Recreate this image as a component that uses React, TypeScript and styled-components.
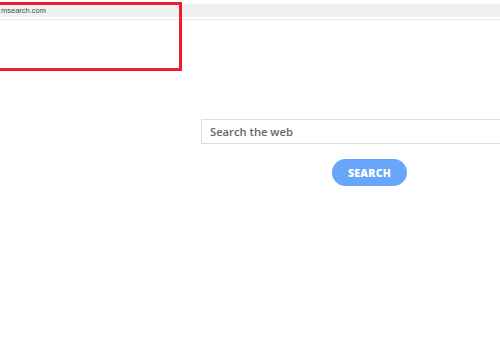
import styled, { createGlobalStyle } from 'styled-components';

const GlobalStyle = createGlobalStyle`
  html, body {
    margin: 0;
    padding: 0;
    background: #ffffff;
    overflow: hidden;
    font-family: "Open Sans", "Liberation Sans", sans-serif;
  }
`;

const Page = styled.div`
  position: relative;
  width: 500px;
  height: 350px;
  overflow: hidden;
  background: #fff;
`;

const BrowserBar = styled.div`
  padding-top: 4px;
  border-bottom: 1px solid #e6e7e9;
  padding-bottom: 2px;
`;

const AddressField = styled.div`
  height: 13px;
  background: #eff0f2;
  display: flex;
  align-items: center;
`;

const Url = styled.span`
  font-family: "Liberation Sans", Arial, sans-serif;
  font-size: 7.5px;
  color: #4a4a4a;
  margin-left: 1px;
`;

const Highlight = styled.div`
  position: absolute;
  left: -10px;
  top: 2px;
  width: 186px;
  height: 63px;
  border: 3px solid #ea1f2b;
`;

const SearchArea = styled.div`
  padding-left: 201px;
  padding-top: 99px;
  display: flex;
  flex-direction: column;
`;

const SearchInput = styled.div`
  width: 320px;
  height: 23px;
  border: 1px solid #dcdcdc;
  display: flex;
  align-items: center;
  padding-left: 8px;
  box-sizing: content-box;
  font-family: "Open Sans", sans-serif;
  font-weight: 600;
  font-size: 11.2px;
  color: #666;
`;

const SearchButton = styled.button`
  margin-top: 15px;
  margin-left: 131px;
  width: 75px;
  height: 27px;
  border: none;
  border-radius: 14px;
  background: #68a6fc;
  color: #fff;
  font-family: "Open Sans", sans-serif;
  font-weight: 800;
  font-size: 10.5px;
  letter-spacing: 0.3px;
  padding: 0;
`;

export default function App() {
  return (
    <Page>
      <GlobalStyle />
      <BrowserBar>
        <AddressField>
          <Url>msearch.com</Url>
        </AddressField>
      </BrowserBar>
      <SearchArea>
        <SearchInput>Search the web</SearchInput>
        <SearchButton>SEARCH</SearchButton>
      </SearchArea>
      <Highlight />
    </Page>
  );
}
